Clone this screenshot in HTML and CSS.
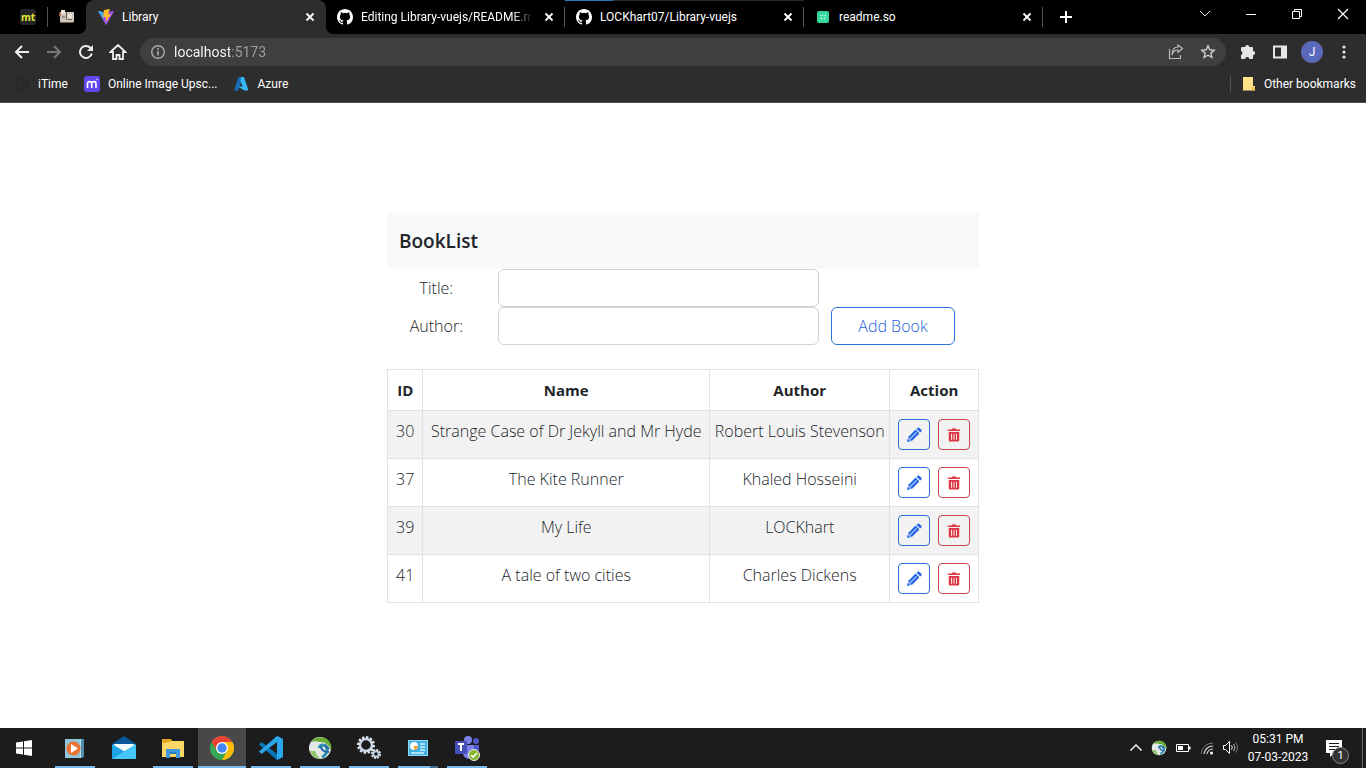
FILE: index.html
```html
<!DOCTYPE html>
<html lang="en">
<head>
<meta charset="utf-8">
<meta name="viewport" content="width=device-width, initial-scale=1">
<title>Library</title>
<link rel="stylesheet" href="styles.css">
</head>
<body>
<svg class="defs" aria-hidden="true">
  <symbol id="github" viewBox="0 0 16 16"><path fill="#fff" d="M8 0C3.58 0 0 3.58 0 8c0 3.54 2.29 6.53 5.47 7.59.4.07.55-.17.55-.38 0-.19-.01-.82-.01-1.49-2.01.37-2.53-.49-2.69-.94-.09-.23-.48-.94-.82-1.13-.28-.15-.68-.52-.01-.53.63-.01 1.08.58 1.23.82.72 1.21 1.87.87 2.33.66.07-.52.28-.87.51-1.07-1.78-.2-3.64-.89-3.64-3.95 0-.87.31-1.59.82-2.15-.08-.2-.36-1.02.08-2.12 0 0 .67-.21 2.2.82a7.6 7.6 0 0 1 4 0c1.53-1.04 2.2-.82 2.2-.82.44 1.1.16 1.92.08 2.12.51.56.82 1.27.82 2.15 0 3.07-1.87 3.75-3.65 3.95.29.25.54.73.54 1.48 0 1.07-.01 1.93-.01 2.2 0 .21.15.46.55.38A8.01 8.01 0 0 0 16 8c0-4.42-3.58-8-8-8z"/></symbol>
  <symbol id="close" viewBox="0 0 16 16"><path d="M4.500 4.500l7 7m0-7l-7 7" stroke="#fff" stroke-width="1.800"/></symbol>
  <symbol id="pencil" viewBox="0 0 16 16"><path fill="#1f66e5" d="M1 15l1.300-5.100 7.300-7.300 3.800 3.800-7.300 7.300zM10.500 1.700l.8-.8c.7-.7 1.500-.7 2.200 0l1.600 1.600c.7.7.7 1.500 0 2.200l-.8.800z"/><path d="M4 11.900l6.600-6.600M2.200 11.200l2.600 2.600" stroke="#c3d6fb" stroke-width="1.100"/></symbol>
  <symbol id="trash" viewBox="0 0 16 16"><path fill="#dc3545" d="M5.500.500h5v1.200H15v1.700H1V1.700h4.500zM2 4.500h12V14q0 1.500-1.500 1.500h-9Q2 15.500 2 14z"/><path d="M5.200 6.500v6.800M8 6.500v6.800M10.800 6.500v6.800" stroke="#fbe4e6" stroke-width="1.200"/></symbol>
  <symbol id="globe" viewBox="0 0 24 24"><circle cx="12" cy="12" r="11" fill="#e4e8e6"/><path fill="#67ad35" d="M3 6C7 0 16 0 20 4c3 3 4 7 3 10-2-5-6-8-10-8-4-1-7-1-10 0z"/><path fill="#8cc466" d="M2 15c2 5 6 8 11 8-3-2-5-5-6-8z"/><path fill="none" stroke="#2a8fb0" stroke-width="3" d="M11 12c2-5 9-3 8 3-1 3-2 5-5 6"/><path fill="none" stroke="#2768a8" stroke-width="2" d="M13 10c0 4 3 6 8 6M17 9l4 4"/></symbol>
</svg>

<header class="browser">
  <div class="tabstrip">
    <button class="pinned first" aria-label="mt"><span class="mt">mt</span></button>
    <button class="pinned" aria-label="Books">
      <svg width="16" height="16" viewBox="0 0 16 16"><path fill="#cfc5bb" d="M1 3h14v10H1z"/><path fill="#eee5d9" d="M2 1h4v4H2zM9 5h4v4H9z"/><path d="M1 13.500h13M3 8h3M9 10.500h4M7.500 3v8" stroke="#6d5c50"/><path fill="#be6a4d" d="M0 4h2v3H0z"/></svg>
    </button>
    <div class="tab active">
      <svg width="16" height="16" viewBox="0 0 16 16"><path fill="#6d7cf5" d="M0 2l8 14 8-14-8 2z"/><path fill="#a64ee8" d="M4 7l4 9 8-14-6 1z"/><path fill="#41a9ef" d="M0 2l5 1 1 8z"/><path fill="#ffbd26" d="M6 1l6-1-2 5h3l-5 8V8H5z"/></svg>
      <button class="tab-title">Library</button>
      <button class="tab-close" aria-label="Close Library"><svg width="16" height="16"><use href="#close"/></svg></button>
    </div>
    <div class="tab">
      <svg width="16" height="16"><use href="#github"/></svg>
      <button class="tab-title fade">Editing Library-vuejs/README.md</button>
      <button class="tab-close" aria-label="Close README tab"><svg width="16" height="16"><use href="#close"/></svg></button>
    </div>
    <div class="tab loading">
      <svg width="16" height="16"><use href="#github"/></svg>
      <button class="tab-title">LOCKhart07/Library-vuejs</button>
      <button class="tab-close" aria-label="Close repository tab"><svg width="16" height="16"><use href="#close"/></svg></button>
    </div>
    <div class="tab">
      <svg width="16" height="16" viewBox="0 0 16 16"><rect x="2" y="2" width="12" height="12" rx="2" fill="#35d69b"/><path d="M7 4.500L6 11.500M10.500 4.500l-1 7M4.500 6.500h7M4 9.500h7" stroke="#8df0c8" stroke-width=".8"/></svg>
      <button class="tab-title">readme.so</button>
      <button class="tab-close" aria-label="Close readme.so"><svg width="16" height="16"><use href="#close"/></svg></button>
    </div>
    <button class="new-tab" aria-label="New tab"><svg width="16" height="16" viewBox="0 0 16 16"><path d="M8 2v12M2 8h12" stroke="#fff" stroke-width="2"/></svg></button>
    <div class="window-buttons">
      <button aria-label="Search tabs"><svg width="12" height="12" viewBox="0 0 12 12"><path d="M1 3l5 5 5-5" fill="none" stroke="#ddd"/></svg></button>
      <button aria-label="Minimize"><svg width="12" height="12" viewBox="0 0 12 12"><path d="M1 6.500h10" stroke="#fff"/></svg></button>
      <button aria-label="Restore"><svg width="12" height="12" viewBox="0 0 12 12"><path d="M1.500 3.500h7v7h-7zM3.500 3.500v-2h7v7h-2" fill="none" stroke="#fff"/></svg></button>
      <button aria-label="Close"><svg width="12" height="12" viewBox="0 0 12 12"><path d="M1 1l10 10M11 1L1 11" stroke="#fff" stroke-width="1.200"/></svg></button>
    </div>
  </div>

  <div class="toolbar">
    <div class="nav">
      <button aria-label="Back"><svg width="16" height="16" viewBox="0 0 16 16"><path d="M15 8H2M8 2L2 8l6 6" fill="none" stroke="#eee" stroke-width="2"/></svg></button>
      <button aria-label="Forward"><svg width="16" height="16" viewBox="0 0 16 16"><path d="M1 8h13M8 2l6 6-6 6" fill="none" stroke="#777" stroke-width="2"/></svg></button>
      <button aria-label="Reload"><svg width="16" height="16" viewBox="0 0 16 16"><path d="M13.800 9.500A6 6 0 1 1 12.300 3.800L14 5.500" fill="none" stroke="#eee" stroke-width="2"/><path fill="#eee" d="M15 1v6H9z"/></svg></button>
      <button aria-label="Home"><svg width="18" height="16" viewBox="0 0 18 16"><path d="M1.500 8L9 1l7.500 7H14v7h-3.500v-4h-3v4H4V8z" fill="none" stroke="#eee" stroke-width="1.800"/></svg></button>
    </div>
    <div class="omnibox">
      <svg width="16" height="16" viewBox="0 0 16 16"><circle cx="8" cy="8" r="6.300" fill="none" stroke="#aaa" stroke-width="1.400"/><path d="M8 7v4.500M8 4v1.700" stroke="#aaa" stroke-width="1.600"/></svg>
      <input class="address" type="text" value="localhost:5173" aria-label="Address">
      <button aria-label="Share"><svg width="16" height="16" viewBox="0 0 16 16"><path d="M1.500 5v9.500h11V11M4 11c1-4 3-5 6-5V8.500l4.500-4L10 1v2C6 3 4 6 4 11z" fill="none" stroke="#bbb" stroke-width="1.200"/></svg></button>
      <button aria-label="Bookmark"><svg width="16" height="16" viewBox="0 0 16 16"><path d="M8 1.800l1.800 4 4.400.4-3.300 2.900 1 4.300L8 11.200l-3.900 2.200 1-4.300-3.300-2.900 4.400-.4z" fill="none" stroke="#ccc" stroke-width="1.400"/></svg></button>
    </div>
    <div class="nav">
      <button aria-label="Extensions"><svg width="16" height="16" viewBox="0 0 16 16"><path fill="#e6e6e6" d="M1 4q0-1 1-1h3.200a2 2 0 0 1 4 0H12q1 0 1 1v3a2 2 0 0 1 0 4.200V14q0 1-1 1H9.300a2.100 2.100 0 0 0-4.200 0H2q-1 0-1-1v-3a2.100 2.100 0 0 0 0-4z"/></svg></button>
      <button aria-label="Side panel"><svg width="16" height="16" viewBox="0 0 16 16"><path d="M2 2.500h12v11H2z" fill="none" stroke="#e6e6e6" stroke-width="2"/><path fill="#e6e6e6" d="M9 2h5v12H9z"/></svg></button>
      <button class="avatar" aria-label="Profile">J</button>
      <button aria-label="Menu"><svg width="16" height="16" viewBox="0 0 16 16" fill="#e6e6e6"><circle cx="8" cy="3" r="1.600"/><circle cx="8" cy="8" r="1.600"/><circle cx="8" cy="13" r="1.600"/></svg></button>
    </div>
  </div>

  <nav class="bookmarks" aria-label="Bookmarks">
    <a href="#"><svg width="16" height="16" viewBox="0 0 16 16"><circle cx="8" cy="8" r="6" fill="none" stroke="#272727" stroke-width="2"/><path d="M8 4v4h3" fill="none" stroke="#272727" stroke-width="1.500"/></svg>iTime</a>
    <a href="#"><svg width="16" height="16" viewBox="0 0 16 16"><rect width="16" height="16" rx="3" fill="#6448ee"/><path d="M3.500 12V7.500c0-2.500 4.200-2.500 4.200 0V12m0-4.500c0-2.500 4.300-2.500 4.300 0V12M12.500 3.500h1" fill="none" stroke="#fff" stroke-width="1.600"/></svg>Online Image Upsc...</a>
    <a href="#"><svg width="16" height="16" viewBox="0 0 16 16"><path fill="#176bb5" d="M5.300 1h4.500L5.300 14.500H1z"/><path fill="#38b4f2" d="M8 1h3l4.500 13.500h-4.200L5 10.500h4.500L7.500 5z"/></svg>Azure</a>
    <a class="other" href="#"><svg width="14" height="16" viewBox="0 0 14 16"><path fill="#ffe187" d="M1 1h10v9h2v4.500H1z"/><path fill="#e9bd4c" d="M10 11h3v3.500h-3z"/></svg>Other bookmarks</a>
  </nav>
</header>

<main class="page">
  <section class="library">
    <h1>BookList</h1>
    <form class="book-form">
      <label for="title">Title:</label>
      <input id="title" type="text">
      <span></span>
      <label for="author">Author:</label>
      <input id="author" type="text">
      <button class="add" type="button">Add Book</button>
    </form>
    <table>
      <colgroup><col class="c-id"><col class="c-name"><col class="c-author"><col class="c-action"></colgroup>
      <thead><tr><th>ID</th><th>Name</th><th>Author</th><th>Action</th></tr></thead>
      <tbody>
        <tr><td>30</td><td>Strange Case of Dr Jekyll and Mr Hyde</td><td>Robert Louis Stevenson</td><td><div class="actions"><button class="edit" aria-label="Edit"><svg width="16" height="16"><use href="#pencil"/></svg></button><button class="delete" aria-label="Delete"><svg width="14" height="14"><use href="#trash"/></svg></button></div></td></tr>
        <tr><td>37</td><td>The Kite Runner</td><td>Khaled Hosseini</td><td><div class="actions"><button class="edit" aria-label="Edit"><svg width="16" height="16"><use href="#pencil"/></svg></button><button class="delete" aria-label="Delete"><svg width="14" height="14"><use href="#trash"/></svg></button></div></td></tr>
        <tr><td>39</td><td>My Life</td><td>LOCKhart</td><td><div class="actions"><button class="edit" aria-label="Edit"><svg width="16" height="16"><use href="#pencil"/></svg></button><button class="delete" aria-label="Delete"><svg width="14" height="14"><use href="#trash"/></svg></button></div></td></tr>
        <tr><td>41</td><td>A tale of two cities</td><td>Charles Dickens</td><td><div class="actions"><button class="edit" aria-label="Edit"><svg width="16" height="16"><use href="#pencil"/></svg></button><button class="delete" aria-label="Delete"><svg width="14" height="14"><use href="#trash"/></svg></button></div></td></tr>
      </tbody>
    </table>
  </section>
</main>

<footer class="taskbar">
  <button class="start" aria-label="Start"><svg width="16" height="16" viewBox="0 0 16 16"><path fill="#fff" d="M0 2.500L7 1.500v6H0zM8 1.300L16 0v7.500H8zM0 8.500h7v6l-7-1zM8 8.500h8V16l-8-1.300z"/></svg></button>
  <div class="apps">
    <button class="open" aria-label="Media Player"><svg width="24" height="24" viewBox="0 0 24 24"><path fill="#4f8fae" d="M3 3h18v18l-3 1H4z"/><path fill="#8fc6dd" d="M2 3h15v19H2z"/><path fill="#b8dce8" d="M17 3h1v19h-1z"/><circle cx="10.500" cy="12.500" r="7" fill="#ec7231"/><path fill="#fff" d="M8 8l7 4.500L8 17z"/></svg></button>
    <button aria-label="Mail"><svg width="26" height="24" viewBox="0 0 26 24"><path fill="#0a579b" d="M1 8L13 0l12 8v5H1z"/><path fill="#f3f8fb" d="M3 8h20v5l-10 4-10-4z"/><path fill="#20a3e5" d="M1 8l15 9-5 6H1z"/><path fill="#43c7f6" d="M25 8v15H1z"/></svg></button>
    <button class="open" aria-label="File Explorer"><svg width="24" height="24" viewBox="0 0 24 24"><path fill="#e5a91e" d="M1 3h9l2 3h11v4H1z"/><path fill="#ffd767" d="M1 7l8-1 2-1h12v16H1z"/><path fill="#3f98dc" d="M5 13h14v9h-4v-5H9v5H5z"/><path fill="#2b79b9" d="M9 16h6v2H9z"/></svg></button>
    <button class="open current" aria-label="Chrome"><svg width="24" height="24" viewBox="0 0 24 24"><circle cx="12" cy="12" r="12" fill="#34a853"/><path fill="#ea4335" d="M1.600 6A12 12 0 0 1 22.400 6H12l-5.200 9z"/><path fill="#fbbc05" d="M22.400 6A12 12 0 0 1 12 24l5.200-9L12 6z"/><circle cx="12" cy="12" r="6" fill="#fff"/><circle cx="12" cy="12" r="4.700" fill="#4285f4"/></svg></button>
    <button class="open" aria-label="Visual Studio Code"><svg width="24" height="24" viewBox="0 0 24 24"><path fill="#0877b9" d="M18 0l6 3v18l-6 3L0 8.500 2.500 6 18 18z"/><path fill="#2ba6ed" d="M18 0l6 3v18l-6 3V6L2.500 18 0 15.500z"/></svg></button>
    <button class="open" aria-label="AnyConnect"><svg width="24" height="24"><use href="#globe"/></svg></button>
    <button class="open" aria-label="Services"><svg width="24" height="24" viewBox="0 0 24 24" fill="none"><circle cx="9" cy="9" r="7.500" stroke="#dce6ee" stroke-width="3" stroke-dasharray="2.300 1.600"/><circle cx="9" cy="9" r="6" stroke="#cad8e5" stroke-width="2.500"/><circle cx="19" cy="18" r="4" stroke="#e8eff3" stroke-width="2" stroke-dasharray="2 1.100"/><circle cx="19" cy="18" r="2.700" stroke="#b9d0e5" stroke-width="1.800"/></svg></button>
    <button class="open split" aria-label="Control Panel"><svg width="22" height="24" viewBox="0 0 22 24"><path fill="#91dbf7" d="M1 4h20v16H1z"/><path fill="#3fb0e6" d="M2 5h18v14H2z"/><circle cx="7" cy="10" r="4" fill="#fff"/><path fill="#f3a133" d="M7 10h4a4 4 0 0 1-4 4z"/><path d="M13 8h5M13 11h5M13 14h5M4 17h13" stroke="#d5f3ff" stroke-width="1.500"/></svg></button>
    <button class="open" aria-label="Teams"><svg width="26" height="26" viewBox="0 0 26 26"><circle cx="14" cy="5" r="4" fill="#7b83eb"/><circle cx="22" cy="6" r="3" fill="#5059c9"/><path fill="#5059c9" d="M18 10h7v8c0 4-6 5-8 1z"/><path fill="#7b83eb" d="M9 10h11v9c0 7-11 6-11-1z"/><rect x="1" y="6" width="12" height="13" rx="1" fill="#464eb8"/><path d="M4 9h6M7 9v7" stroke="#fff" stroke-width="2"/><circle cx="20" cy="20" r="5.500" fill="#84b82b" stroke="#eee"/><path d="M17 20l2 2 4-4" fill="none" stroke="#fff" stroke-width="1.700"/></svg></button>
  </div>
  <div class="tray">
    <button aria-label="Show hidden icons"><svg width="14" height="14" viewBox="0 0 14 14"><path d="M1.500 9.500L7 4l5.500 5.500" fill="none" stroke="#fff" stroke-width="1.400"/></svg></button>
    <button aria-label="AnyConnect"><svg width="16" height="16"><use href="#globe"/></svg></button>
    <button aria-label="Battery"><svg width="16" height="16" viewBox="0 0 16 16"><path d="M1.500 4.500h12v7h-12z" fill="none" stroke="#fff"/><path fill="#fff" d="M3 6h5v4H3zM14 6.500h1.500v3H14z"/></svg></button>
    <button aria-label="Network"><svg width="16" height="16" viewBox="0 0 16 16" fill="none"><path d="M2 14A12 12 0 0 1 14 3" stroke="#777"/><path d="M5 14a9 9 0 0 1 9-8M8 14a6 6 0 0 1 6-5" stroke="#ddd" stroke-width="1.200"/><circle cx="12.500" cy="13" r="1.500" fill="#fff"/></svg></button>
    <button aria-label="Volume"><svg width="16" height="16" viewBox="0 0 16 16" fill="none"><path d="M.500 5.500h2l4-4v12l-4-4h-2z" stroke="#fff"/><path d="M8.500 5.500q1.500 2 0 4" stroke="#fff"/><path d="M10.500 4q3 3.500 0 7" stroke="#bbb"/><path d="M12.500 2.500q4 5 0 10" stroke="#777"/></svg></button>
    <button class="clock"><span>05:31 PM</span><span>07-03-2023</span></button>
    <button class="notify" aria-label="1 notification"><svg width="20" height="20" viewBox="0 0 20 20"><path fill="#fff" d="M2 2h16v13h-8l-4 4v-4H2z"/><path d="M5 5.500h10M5 8.500h10M5 11.500h6" stroke="#1c1c1c"/></svg><span class="badge">1</span></button>
  </div>
</footer>
</body>
</html>
```

FILE: styles.css
```css
* { box-sizing: border-box; }

body {
  margin: 0;
  min-height: 100vh;
  display: flex;
  flex-direction: column;
  background: #fff;
  color: #212529;
  font-family: "Open Sans", "Noto Sans", sans-serif;
}

button, input { font: inherit; color: inherit; }
button { padding: 0; border: 0; background: none; }
svg { display: block; flex: none; }
.defs { position: absolute; width: 0; height: 0; }

/* Browser frame */
.browser { background: #2d2d2d; border-bottom: 1px solid #4a4a4a; color: #fff; font-family: Roboto, "Open Sans", sans-serif; font-size: 12px; }
.tabstrip { display: flex; height: 34px; background: #000; }
.pinned { width: 38px; flex: none; display: grid; place-items: center; }
.pinned.first {
  width: 48px;
  padding-left: 8px;
  background: linear-gradient(#555, #555) right center / 1px 20px no-repeat;
}
.mt {
  width: 16px;
  border-radius: 3px;
  background: #252525;
  color: #e5e630;
  font: bold 10px/16px "Open Sans", sans-serif;
}
.tab {
  position: relative;
  flex: 0 1 239px;
  min-width: 0;
  display: flex;
  align-items: center;
  gap: 8px;
  padding: 0 8px 0 11px;
  background: linear-gradient(#555, #555) right center / 1px 20px no-repeat;
}
.tab.active { flex-basis: 240px; padding-left: 12px; background: #2d2d2d; border-radius: 8px 8px 0 0; }
.tab.active::before, .tab.active::after {
  content: "";
  position: absolute;
  bottom: 0;
  width: 8px;
  height: 8px;
}
.tab.active::before { right: 100%; background: radial-gradient(circle at 0 0, transparent 8px, #2d2d2d 8px); }
.tab.active::after { left: 100%; background: radial-gradient(circle at 100% 0, transparent 8px, #2d2d2d 8px); }
.tab.loading::before {
  content: "";
  position: absolute;
  top: 0;
  left: 0;
  right: 0;
  height: 1px;
  background: linear-gradient(90deg, #2a76b8 20%, #292929 20%);
}
.tab-title { flex: 1; min-width: 0; overflow: hidden; white-space: nowrap; text-align: left; }
.fade { -webkit-mask-image: linear-gradient(90deg, #000 88%, transparent); mask-image: linear-gradient(90deg, #000 88%, transparent); }
.new-tab { width: 46px; display: grid; place-items: center; }
.window-buttons { display: flex; height: 28px; margin-left: auto; }
.window-buttons button { width: 46px; display: grid; place-items: center; }

.toolbar { display: flex; align-items: center; height: 36px; padding: 0 6px; }
.nav { display: flex; }
.nav button { width: 32px; height: 28px; display: grid; place-items: center; }
.omnibox {
  flex: 1;
  min-width: 0;
  display: flex;
  align-items: center;
  gap: 16px;
  height: 28px;
  margin: 0 6px;
  padding: 0 10px;
  border-radius: 14px;
  background: #3f3f3f;
}
.address {
  flex: 1;
  min-width: 0;
  margin-left: -8px;
  padding: 0;
  border: 0;
  outline: 0;
  font-size: 14px;
  line-height: 20px;
  color: transparent;
  background: linear-gradient(90deg, #fff 56px, #a3a3a3 56px);
  -webkit-background-clip: text;
  background-clip: text;
}
.nav .avatar {
  width: 22px;
  height: 22px;
  margin: 3px 5px;
  border-radius: 50%;
  background: #5b69bc;
  font-size: 12px;
}

.bookmarks { display: flex; align-items: center; gap: 16px; height: 32px; padding: 0 10px 4px 14px; }
.bookmarks a { display: flex; align-items: center; gap: 8px; color: #fff; text-decoration: none; }
.bookmarks .other { margin-left: auto; padding-left: 11px; border-left: 1px solid #555; }

/* Library page */
.page { flex: 1; padding: 110px 16px 24px; }
.library { max-width: 592px; margin: 0 auto; font-size: 16px; font-weight: 300; line-height: 24px; }
.library h1 {
  margin: 0;
  padding: 16px 12px;
  background: #f8f9fa;
  font-size: 19px;
  font-weight: 600;
  line-height: 24px;
}
.book-form { display: grid; grid-template-columns: 2fr 7fr 3fr; margin-bottom: 24px; text-align: center; }
.book-form label { padding: 7px 0; }
.book-form input {
  min-width: 0;
  height: 38px;
  margin: 0 12px;
  padding: 0 12px;
  border: 1px solid #ced4da;
  border-radius: 6px;
}
.add { margin-right: 24px; border: 1px solid #2a6fd6; border-radius: 6px; color: #1f62e0; }

table { width: 100%; border-collapse: collapse; table-layout: fixed; text-align: center; }
.c-id { width: 6%; }
.c-name { width: 48.5%; }
.c-author { width: 30.5%; }
.c-action { width: 15%; }
th, td { padding: 8px 0; border: 1px solid #dee2e6; vertical-align: top; }
th { font-size: 15px; font-weight: 700; }
tbody tr:nth-child(odd) { background: #f2f2f2; }
.actions { display: flex; justify-content: center; gap: 8px; }
.actions button { width: 32px; height: 31px; display: grid; place-items: center; border-radius: 4px; border: 1px solid #2a6fd6; }
.actions .delete { border-color: #c94553; }

/* Desktop taskbar */
.taskbar { display: flex; height: 40px; background: #1c1c1c; color: #fff; font-family: Roboto, "Open Sans", sans-serif; }
.start { width: 48px; display: grid; place-items: center; }
.apps { display: flex; gap: 1px; margin-left: 3px; }
.apps button { width: 48px; display: grid; place-items: center; }
.apps .open { background: linear-gradient(#76b9ed, #76b9ed) center bottom / 40px 2px no-repeat; }
.apps .current { background: linear-gradient(#76b9ed, #76b9ed) center bottom / 48px 2px no-repeat #484848; }
.apps .split { background-image: linear-gradient(90deg, #76b9ed 32px, #466f8e 32px); }
.tray { display: flex; align-items: center; gap: 8px; margin-left: auto; padding-right: 3px; font-size: 12px; }
.clock { display: flex; flex-direction: column; align-items: center; width: 62px; line-height: 18px; }
.notify {
  position: relative;
  height: 40px;
  width: 46px;
  padding-right: 12px;
  display: grid;
  place-items: center;
  border-right: 1px solid #666;
}
.badge {
  position: absolute;
  left: 15px;
  bottom: 4px;
  width: 17px;
  height: 17px;
  border: 1px solid #888;
  border-radius: 50%;
  background: #333;
  font-size: 11px;
  line-height: 15px;
}
```
